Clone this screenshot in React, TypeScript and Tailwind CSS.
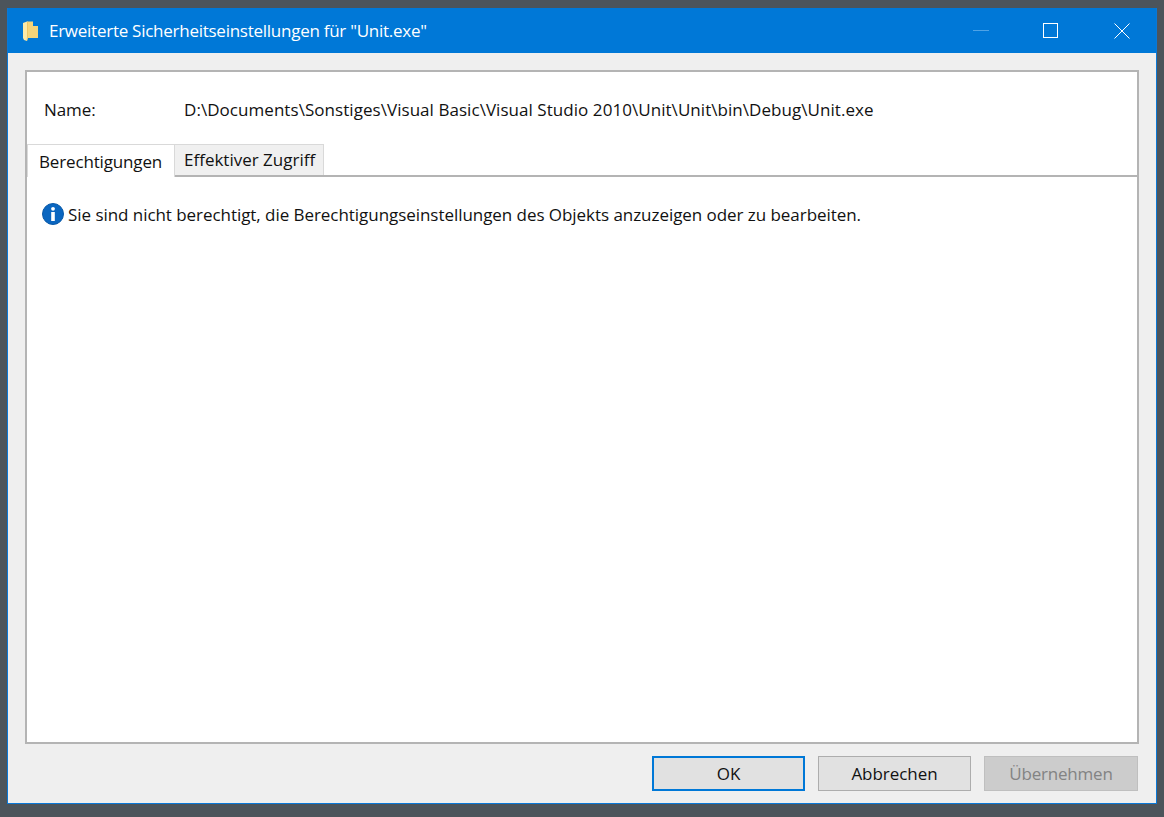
const font = { fontFamily: '"Open Sans", "Noto Sans", sans-serif' }

function FolderIcon() {
  return (
    <svg width="15" height="20" viewBox="0 0 15 20" className="shrink-0">
      <path d="M4 0.500h6v4.500h5v12H4z" fill="#f6d57a" />
      <path d="M0 2l4-1.500 1 .5v15l-1 4-3-1-1-2z" fill="#fdeaa8" />
      <path d="M5 1v15l-1 4-.5-.5.5-3.500V1z" fill="#eec766" />
    </svg>
  )
}

function InfoIcon() {
  return (
    <svg width="22" height="22" viewBox="0 0 22 22" className="shrink-0">
      <circle cx="11" cy="11" r="10.500" fill="#0a66c0" stroke="#0a5aa8" />
      <circle cx="11" cy="5.800" r="1.900" fill="#fff" />
      <rect x="9.200" y="9" width="3.600" height="9" fill="#fff" />
    </svg>
  )
}

function CloseIcon() {
  return (
    <svg width="16" height="16" viewBox="0 0 16 16" className="shrink-0">
      <path d="M0.500 0.500l15 15M15.500 0.500l-15 15" stroke="#fff" strokeWidth="1" fill="none" />
    </svg>
  )
}

export default function App() {
  return (
    <div className="w-[1164px] h-[817px] bg-[#4c545b] pl-[7px] pr-[7px] pt-[8px] pb-[13px] text-[17px] text-[#111]" style={font}>
      <div className="h-full flex flex-col bg-[#efefef] border-x border-b border-[#0a78d7]">
        {/* Titelleiste */}
        <div className="h-[45px] shrink-0 bg-[#0078d7] flex items-center pl-[15px] text-white">
          <FolderIcon />
          <span className="ml-[11px] tracking-[-0.26px]">Erweiterte Sicherheitseinstellungen für "Unit.exe"</span>
          <div className="ml-auto flex items-center">
            <div className="w-[16px] h-px bg-[#4fa3e6] mr-[54px]" />
            <div className="w-[15px] h-[15px] border border-white mr-[56px]" />
            <div className="mr-[26px]">
              <CloseIcon />
            </div>
          </div>
        </div>

        {/* Inhalt */}
        <div className="flex-1 flex flex-col px-[17px] pt-[17px] pb-[12px]">
          <div className="flex-1 flex flex-col bg-white border-2 border-[#b4b4b4]">
            <div className="flex h-[72px] pt-[26px] pl-[17px] leading-[24px]">
              <span className="w-[140px] -tracking-[0.1px]">Name:</span>
              <span className="tracking-[0.05px]">D:\Documents\Sonstiges\Visual Basic\Visual Studio 2010\Unit\Unit\bin\Debug\Unit.exe</span>
            </div>

            {/* Tabs */}
            <div className="flex h-[33px] border-b-2 border-[#b4b4b4] items-start">
              <div className="relative z-10 w-[148px] h-[33px] bg-white border border-b-0 border-[#d9d9d9] pl-[11px] pt-[5px] leading-[24px] tracking-[-0.15px]">
                Berechtigungen
              </div>
              <div className="w-[149px] h-[31px] bg-[#f0f0f0] border border-l-0 border-b-0 border-[#d9d9d9] pl-[9px] pt-[3px] leading-[24px]">
                Effektiver Zugriff
              </div>
            </div>

            <div className="flex items-start pl-[15px] pt-[26px] gap-[4px] leading-[22px]">
              <InfoIcon />
              <span className="mt-px tracking-[-0.05px]">Sie sind nicht berechtigt, die Berechtigungseinstellungen des Objekts anzuzeigen oder zu bearbeiten.</span>
            </div>
          </div>

          {/* Schaltflächen */}
          <div className="flex justify-end gap-[13px] mt-[12px] mr-px leading-none">
            <button className="w-[153px] h-[35px] bg-[#e1e1e1] border-2 border-[#0078d7]">OK</button>
            <button className="w-[153px] h-[35px] bg-[#e1e1e1] border border-[#adadad] tracking-[-0.05px]">Abbrechen</button>
            <button className="w-[154px] h-[35px] bg-[#cccccc] border border-[#bfbfbf] text-[#838383] tracking-[-0.2px]">Übernehmen</button>
          </div>
        </div>
      </div>
    </div>
  )
}
